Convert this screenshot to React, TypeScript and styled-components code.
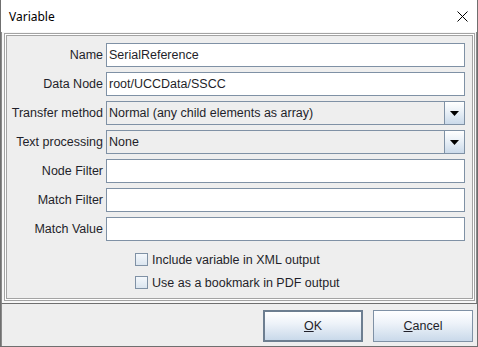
import React from "react";
import styled, { createGlobalStyle } from "styled-components";

const Global = createGlobalStyle`
  html, body { margin: 0; padding: 0; background: #ffffff; }
  #root { width: 478px; height: 347px; }
  * { box-sizing: border-box; }
`;

const Window = styled.div`
  width: 478px;
  height: 347px;
  display: flex;
  flex-direction: column;
  border: 1px solid #6f6f6f;
  border-top: none;
  background: #ffffff;
  font-family: "Liberation Sans", Arial, sans-serif;
  font-size: 12.5px;
  color: #222;
`;

const TitleBar = styled.div`
  height: 32px;
  flex: none;
  display: flex;
  align-items: center;
  justify-content: space-between;
  padding: 0 9px 0 8px;
  background: #ffffff;
`;

const Title = styled.span`
  font-family: "Noto Sans", "Segoe UI", sans-serif;
  font-size: 12px;
  color: #000;
`;

const CloseIcon = styled.svg`
  width: 11px;
  height: 11px;
  display: block;
`;

const Body = styled.div`
  flex: 1;
  display: flex;
  flex-direction: column;
  padding: 1px 1px 2px 2px;
  border-left: 1px solid #8a8a8a;
  border-right: 1px solid #8a8a8a;
  background: #f7f7f7;
`;

const GrooveOuter = styled.div`
  flex: 1;
  display: flex;
  flex-direction: column;
  border: 1px solid #a3a3a3;
  background: #ffffff;
  padding: 1px;
`;

const Panel = styled.div`
  flex: 1;
  border: 1px solid #a3a3a3;
  background: #eeeeee;
  padding: 7px 7px 0 0;
  display: flex;
  flex-direction: column;
`;

const FormGrid = styled.div`
  display: grid;
  grid-template-columns: 96px 1fr;
  column-gap: 3px;
  row-gap: 5px;
  align-items: center;
`;

const Label = styled.label`
  text-align: right;
  white-space: nowrap;
  color: #1f1f2a;
`;

const TextField = styled.div`
  height: 24px;
  border: 1px solid #7f91a5;
  background: #ffffff;
  padding: 0 2px;
  display: flex;
  align-items: center;
  white-space: nowrap;
  overflow: hidden;
  color: #1f1f2a;
`;

const Combo = styled.div`
  height: 24px;
  display: flex;
`;

const ComboText = styled.div`
  flex: 1;
  border: 1px solid #7f91a5;
  background: #eeeeee;
  padding: 0 2px;
  display: flex;
  align-items: center;
  white-space: nowrap;
  overflow: hidden;
  color: #1f1f2a;
`;

const ComboButton = styled.div`
  width: 20px;
  border: 1px solid #7f91a5;
  border-left: none;
  background: linear-gradient(to bottom, #ffffff 0%, #e9f0f7 45%, #cbdaea 100%);
  display: flex;
  align-items: center;
  justify-content: center;
`;

const Arrow = styled.svg`
  width: 9px;
  height: 5px;
  display: block;
`;

const CheckGroup = styled.div`
  grid-column: 2;
  display: flex;
  flex-direction: column;
  margin: 2px 0 0 29px;
`;

const CheckRow = styled.div`
  height: 23px;
  display: flex;
  align-items: center;
  gap: 4px;
  color: #1f1f2a;
`;

const CheckBox = styled.span`
  width: 13px;
  height: 13px;
  border: 1px solid #7f91a5;
  background: linear-gradient(to bottom, #f4f8fc 0%, #dbe5ef 100%);
  display: inline-block;
`;

const ButtonBar = styled.div`
  flex: none;
  height: 43px;
  display: flex;
  justify-content: flex-end;
  align-items: flex-start;
  gap: 10px;
  padding: 6px 4px 0 0;
  border-top: 1px solid #6f6f6f;
  border-left: 1px solid #8a8a8a;
  background: #eeeeee;
`;

const Button = styled.button<{ $default?: boolean }>`
  width: 100px;
  height: 32px;
  border: ${(p) => (p.$default ? "2px solid #6d7e90" : "1px solid #7f91a5")};
  background: linear-gradient(to bottom, #ffffff 0%, #eef3f9 40%, #c9d9ea 100%);
  font-family: "Liberation Sans", Arial, sans-serif;
  font-size: 12.5px;
  color: #1f1f2a;
  padding: 0;
  cursor: default;
`;

const Mnemonic = styled.span`
  text-decoration: underline;
`;

const fields: { label: string; value?: string; combo?: boolean }[] = [
  { label: "Name", value: "SerialReference" },
  { label: "Data Node", value: "root/UCCData/SSCC" },
  { label: "Transfer method", value: "Normal (any child elements as array)", combo: true },
  { label: "Text processing", value: "None", combo: true },
  { label: "Node Filter", value: "" },
  { label: "Match Filter", value: "" },
  { label: "Match Value", value: "" },
];

export default function App() {
  return (
    <>
      <Global />
      <Window>
        <TitleBar>
          <Title>Variable</Title>
          <CloseIcon viewBox="0 0 11 11">
            <path d="M0.5 0.5 L10.5 10.5 M10.5 0.5 L0.5 10.5" stroke="#000" strokeWidth="1" />
          </CloseIcon>
        </TitleBar>
        <Body>
          <GrooveOuter>
            <Panel>
              <FormGrid>
                {fields.map((f) => (
                  <React.Fragment key={f.label}>
                    <Label>{f.label}</Label>
                    {f.combo ? (
                      <Combo>
                        <ComboText>{f.value}</ComboText>
                        <ComboButton>
                          <Arrow viewBox="0 0 9 5">
                            <path d="M0 0 H9 L4.5 5 Z" fill="#000" />
                          </Arrow>
                        </ComboButton>
                      </Combo>
                    ) : (
                      <TextField>{f.value}</TextField>
                    )}
                  </React.Fragment>
                ))}
                <CheckGroup>
                  <CheckRow>
                    <CheckBox />
                    Include variable in XML output
                  </CheckRow>
                  <CheckRow>
                    <CheckBox />
                    Use as a bookmark in PDF output
                  </CheckRow>
                </CheckGroup>
              </FormGrid>
            </Panel>
          </GrooveOuter>
        </Body>
        <ButtonBar>
          <Button $default>
            <Mnemonic>O</Mnemonic>K
          </Button>
          <Button>
            <Mnemonic>C</Mnemonic>ancel
          </Button>
        </ButtonBar>
      </Window>
    </>
  );
}
